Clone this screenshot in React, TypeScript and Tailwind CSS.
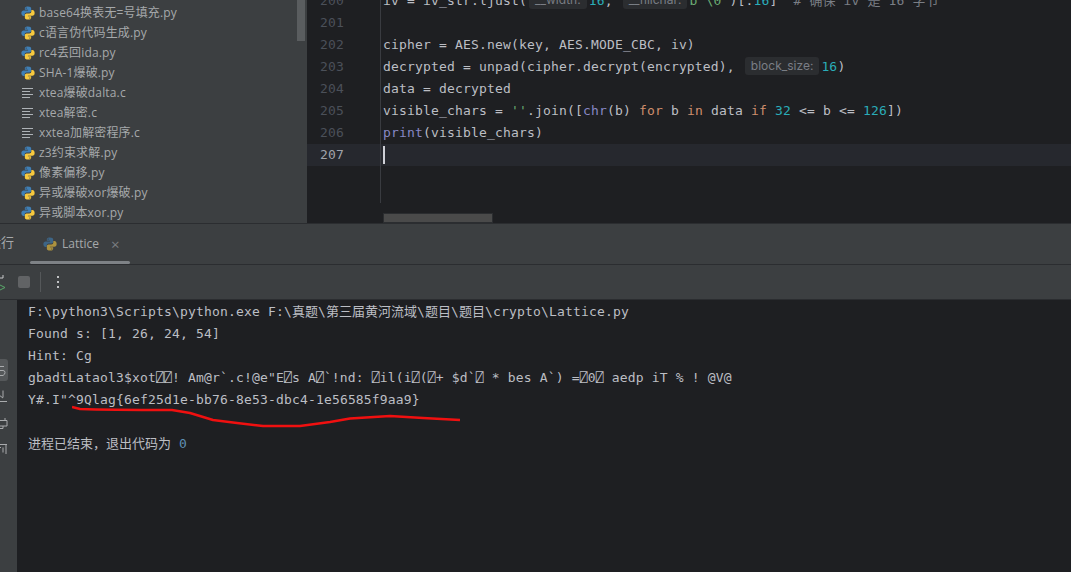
const mono = "font-['DejaVu_Sans_Mono','Noto_Sans_CJK_SC',monospace] text-[13px] tracking-[0.17px]";

function PyIcon({ dim }: { dim?: boolean }) {
  return (
    <svg width="14" height="14" viewBox="0 0 16 16" className={dim ? "opacity-60" : ""}>
      <path fill="#3f7fb5" d="M7.9 0.5C4.6 0.5 4.4 1.9 4.4 2.6V4.4H8.1V5H2.9C1.5 5 0.4 6.1 0.4 8.1S1.5 11.4 2.9 11.4H4.2V9.6C4.2 8.3 5.3 7.4 6.5 7.4H9.7C10.8 7.4 11.6 6.5 11.6 5.5V2.6C11.6 1.5 10.6 0.5 7.9 0.5ZM5.9 1.6A0.7 0.7 0 1 1 5.9 3A0.7 0.7 0 0 1 5.9 1.6Z" />
      <path fill="#f7c93e" d="M8.1 15.5C11.4 15.5 11.6 14.1 11.6 13.4V11.6H7.9V11H13.1C14.5 11 15.6 9.9 15.6 7.9S14.5 4.6 13.1 4.6H11.8V6.4C11.8 7.7 10.7 8.6 9.5 8.6H6.3C5.2 8.6 4.4 9.5 4.4 10.5V13.4C4.4 14.5 5.4 15.5 8.1 15.5ZM10.1 14.4A0.7 0.7 0 1 1 10.1 13A0.7 0.7 0 0 1 10.1 14.4Z" />
    </svg>
  );
}

function TextIcon() {
  return (
    <svg width="14" height="14" viewBox="0 0 14 14" stroke="#aeb3b7" strokeWidth="1">
      <path d="M1 2.5H12M1 5.5H9M1 8.5H12M1 11.5H9" />
    </svg>
  );
}

const files: [string, boolean][] = [
  ["base64换表无=号填充.py", true],
  ["c语言伪代码生成.py", true],
  ["rc4丢回ida.py", true],
  ["SHA-1爆破.py", true],
  ["xtea爆破dalta.c", false],
  ["xtea解密.c", false],
  ["xxtea加解密程序.c", false],
  ["z3约束求解.py", true],
  ["像素偏移.py", true],
  ["异或爆破xor爆破.py", true],
  ["异或脚本xor.py", true],
];

function Hint({ children }: { children: string }) {
  return (
    <span className="mx-[2px] inline-flex h-[18px] items-center rounded-[3px] bg-[#2b2d30] px-[6px] align-[1px] font-['Inter',sans-serif] text-[12px] leading-none tracking-normal text-[#7a7e85]">
      {children}
    </span>
  );
}

const Kw = ({ children }: { children: string }) => <span className="text-[#cf8e6d]">{children}</span>;
const Num = ({ children }: { children: string }) => <span className="text-[#2aacb8]">{children}</span>;
const Cjk = ({ children }: { children: string }) => <span className="tracking-normal">{children}</span>;

function CodeLine({ n, active, children }: { n: number; active?: boolean; children?: React.ReactNode }) {
  return (
    <div className={`flex h-[22px] items-center ${active ? "bg-[#26282e]" : ""}`}>
      <div className={`w-[37px] shrink-0 text-right ${active ? "text-[#a1a3ab]" : "text-[#4b5059]"}`}>{n}</div>
      <div className="ml-[36px] h-full w-px shrink-0 bg-[#393b40]" />
      <div className="flex h-full items-center whitespace-pre pl-[2px]">{children}</div>
    </div>
  );
}

export default function App() {
  return (
    <div className="flex h-[572px] w-[1071px] flex-col overflow-hidden bg-[#1e1f22]">
      <div className="flex h-[223px] shrink-0">
        {/* project tree */}
        <div className="relative w-[307px] shrink-0 bg-[#3c3f41] pt-[3px] font-['Open_Sans','Noto_Sans_CJK_SC',sans-serif] text-[12px] tracking-[0.15px] text-[#a6a9ab]">
          {files.map(([name, py]) => (
            <div key={name} className="flex h-[20px] items-center gap-[4px] pl-[21px]">
              {py ? <PyIcon /> : <TextIcon />}
              <span className="whitespace-nowrap">{name}</span>
            </div>
          ))}
          <div className="absolute right-[2px] top-0 h-[41px] w-[8px] bg-[#5a5d5f]" />
        </div>

        {/* editor */}
        <div className={`relative min-w-0 flex-1 text-[#bcbec4] ${mono}`}>
          <div className="-mt-[10px]">
            <CodeLine n={200}>
              <span>
                iv = iv_str.ljust(<Hint>__width:</Hint>
                <Num>16</Num>, <Hint>__fillchar:</Hint>
                <span className="text-[#6aab73]">b'\0'</span>)[:<Num>16</Num>]  <span className="text-[#7a7e85]"># <Cjk>确保</Cjk> iv <Cjk>是</Cjk> 16 <Cjk>字节</Cjk></span>
              </span>
            </CodeLine>
            <CodeLine n={201} />
            <CodeLine n={202}>cipher = AES.new(key, AES.MODE_CBC, iv)</CodeLine>
            <CodeLine n={203}>
              <span>
                decrypted = unpad(cipher.decrypt(encrypted), <Hint>block_size:</Hint>
                <Num>16</Num>)
              </span>
            </CodeLine>
            <CodeLine n={204}>data = decrypted</CodeLine>
            <CodeLine n={205}>
              <span>
                visible_chars = <span className="text-[#6aab73]">''</span>.join([<span className="text-[#8888c6]">chr</span>(b) <Kw>for</Kw> b <Kw>in</Kw> data <Kw>if</Kw> <Num>32</Num> &lt;= b &lt;= <Num>126</Num>])
              </span>
            </CodeLine>
            <CodeLine n={206}>
              <span>
                <span className="text-[#8888c6]">print</span>(visible_chars)
              </span>
            </CodeLine>
            <CodeLine n={207} active>
              <span className="h-[18px] w-[2px] bg-[#ced0d6]" />
            </CodeLine>
            <div className="ml-[73px] h-[37px] w-px bg-[#393b40]" />
          </div>
          {/* horizontal scrollbar */}
          <div className="absolute bottom-[1px] left-[77px] h-[8px] w-[108px] bg-[#4a4a4a] outline outline-[#2b2d30]" />
        </div>
      </div>

      {/* run panel tabs */}
      <div className="flex h-[42px] shrink-0 border-y border-[#2b2d30] bg-[#3c3f41] font-['Open_Sans','Noto_Sans_CJK_SC',sans-serif] text-[12px] text-[#a6a9ab]">
        <span className="flex h-[38px] w-[30px] shrink-0 items-center justify-end overflow-hidden whitespace-nowrap pr-[16px] text-[13px]">运行</span>
        <div className="relative flex h-[40px] w-[100px] items-center pl-[13px]">
          <PyIcon dim />
          <span className="ml-[5px] text-[12px]">Lattice</span>
          <span className="ml-[12px] text-[15px] leading-none text-[#7b7e81]">×</span>
          <div className="absolute bottom-0 left-0 h-[3px] w-[100px] rounded-full bg-[#7e8286]" />
        </div>
      </div>

      {/* toolbar */}
      <div className="flex h-[35px] shrink-0 items-center border-b border-[#2b2d30] bg-[#3c3f41]">
        <svg width="8" height="20" viewBox="0 0 8 20" fill="none" className="shrink-0">
          <path d="M-1 3V6H3V3" stroke="#c8cacc" strokeWidth="1" />
          <path d="M-2 12L5 15.5L-2 19" stroke="#59a869" strokeWidth="1" />
        </svg>
        <div className="ml-[10px] h-[12px] w-[12px] rounded-[2px] bg-[#616365]" />
        <div className="ml-[10px] h-[20px] w-px bg-[#55585a]" />
        <div className="ml-[16px] flex flex-col gap-[3px]">
          <div className="h-[2px] w-[2px] bg-[#c0c2c4]" />
          <div className="h-[2px] w-[2px] bg-[#c0c2c4]" />
          <div className="h-[2px] w-[2px] bg-[#c0c2c4]" />
        </div>
      </div>

      {/* console */}
      <div className="flex min-h-0 flex-1">
        <div className="flex w-[17px] shrink-0 flex-col bg-[#3c3f41] pt-[59px]">
          <div className="h-[22px] w-[8px] rounded-r-[3px] bg-[#55585a]">
            <svg width="8" height="22" viewBox="0 0 8 22" fill="none" stroke="#a9abad">
              <path d="M-1 7.5H4M-1 11.5H3Q5 11.5 5 13.5T3 16.5H-1" />
            </svg>
          </div>
          <svg width="8" height="12" viewBox="0 0 8 12" className="mt-[9px]" fill="none" stroke="#a9abad">
            <path d="M3 0.5V7.5M-1 5L3 8M-1 11.5H7" />
          </svg>
          <svg width="8" height="12" viewBox="0 0 8 12" className="mt-[15px]" fill="none" stroke="#a9abad">
            <path d="M-1 3.5H5V1M-1 3.5H7V9H-1M3 9V11.5H-1" />
          </svg>
          <svg width="8" height="13" viewBox="0 0 8 13" className="mt-[13px]" fill="none" stroke="#a9abad">
            <path d="M-1 2.5H7M6 2.5V12M1 5.5H-1M3 5.5V10.5" />
          </svg>
        </div>
        <div className={`relative flex-1 pl-[11px] pt-[1px] leading-[22px] text-[#bcbec4] ${mono}`}>
          <div className="whitespace-pre">F:\python3\Scripts\python.exe F:\<Cjk>真题</Cjk>\<Cjk>第三届黄河流域</Cjk>\<Cjk>题目</Cjk>\<Cjk>题目</Cjk>\crypto\Lattice.py</div>
          <div className="whitespace-pre">Found s: [1, 26, 24, 54]</div>
          <div className="whitespace-pre">Hint: Cg</div>
          <div className="whitespace-pre">gbadtLataol3$xot⍁⍁! Am@r`.c!@e"E⍁s A⍁`!nd: ⍁il(i⍁(⍁+ $d`⍁ * bes A`) =⍁0⍁ aedp iT % ! @V@</div>
          <div className="whitespace-pre">Y#.I"^9Qlag{"{"}6ef25d1e-bb76-8e53-dbc4-1e56585f9aa9{"}"}</div>
          <div className="h-[22px]" />
          <div className="whitespace-pre">
            <Cjk>进程已结束，退出代码为</Cjk> <span className="text-[#5f8fb4]">0</span>
          </div>
          {/* red marker scribble */}
          <svg width="400" height="30" viewBox="0 0 400 30" fill="none" className="absolute left-[55px] top-[104px]">
            <path
              d="M0 3L8 5C35 6 70 6 100 6L118 9L141 16L165 19L191 22H228L258 18L278 14.5L318 12L351 14L388 16"
              stroke="#f01010"
              strokeWidth="2.4"
              strokeLinejoin="round"
            />
          </svg>
        </div>
      </div>
    </div>
  );
}
